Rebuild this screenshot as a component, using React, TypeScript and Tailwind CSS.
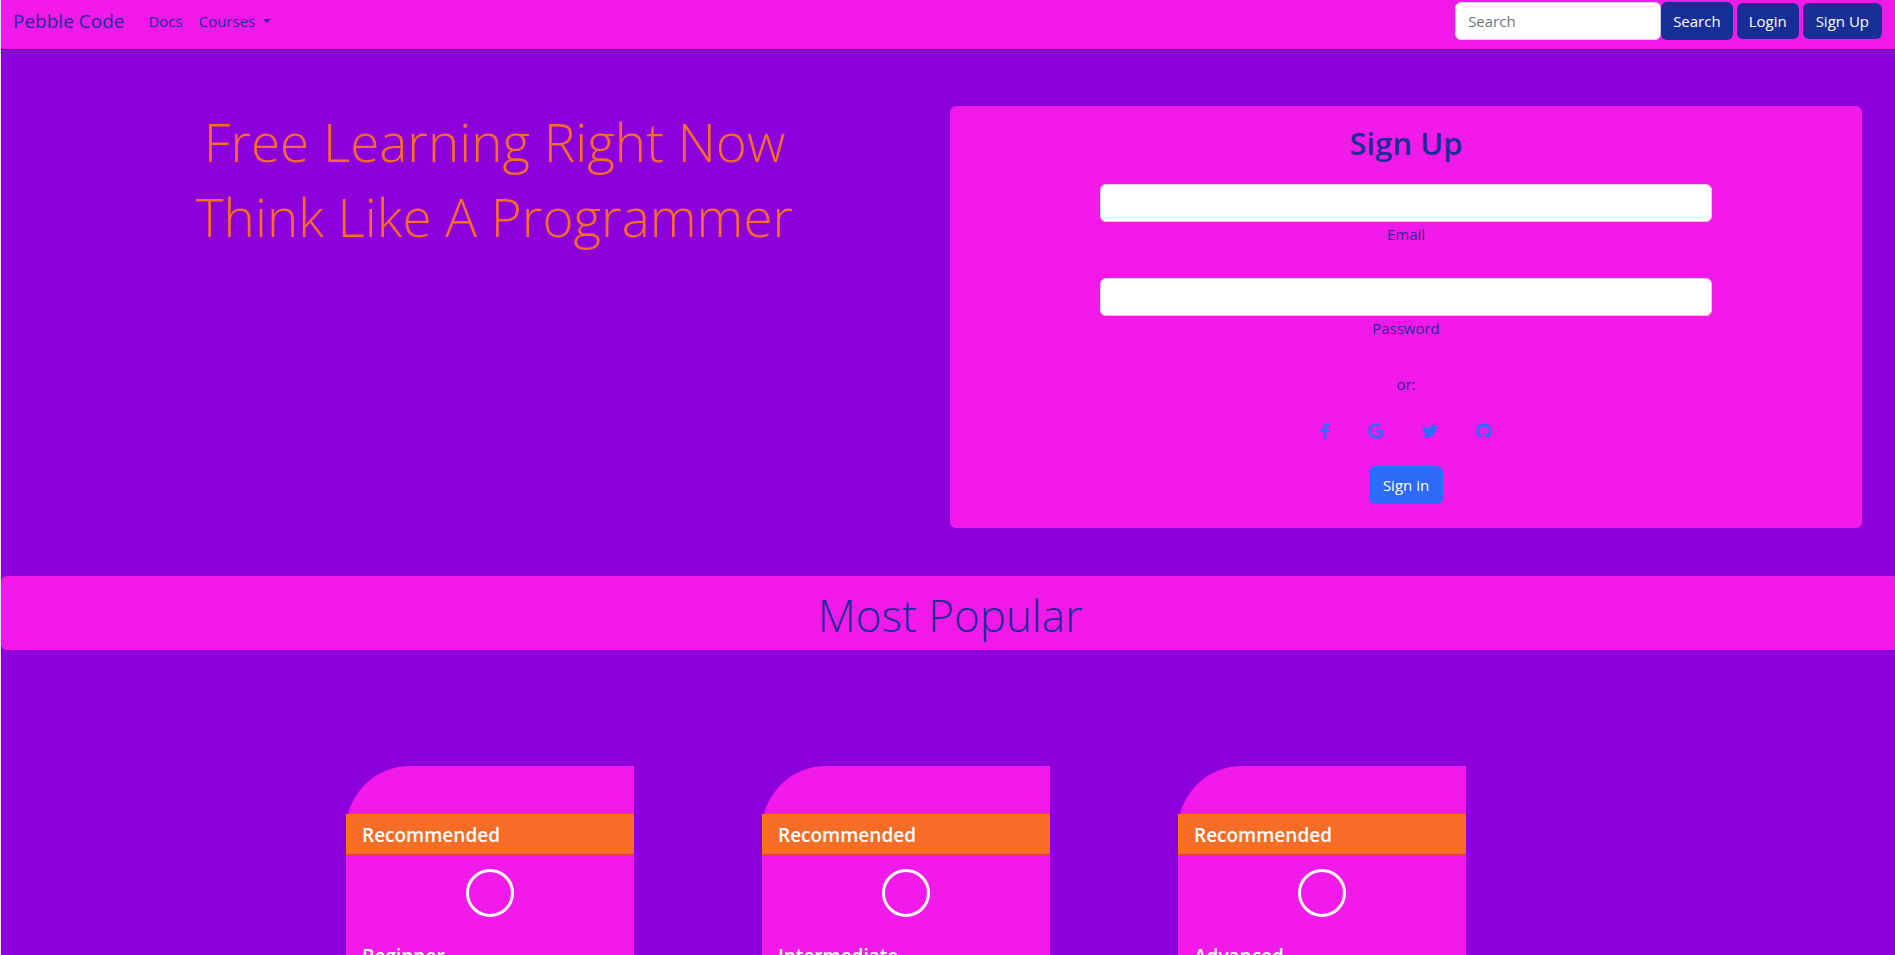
import React from "react";
import { FaFacebookF, FaGoogle, FaTwitter, FaGithub } from "react-icons/fa";

const levels = ["Beginner", "Intermediate", "Advanced"];

const socials = [
  { name: "Facebook", Icon: FaFacebookF, size: "h-4 w-[10px]" },
  { name: "Google", Icon: FaGoogle, size: "size-4" },
  { name: "Twitter", Icon: FaTwitter, size: "size-4" },
  { name: "GitHub", Icon: FaGithub, size: "size-4" },
];

function NavBar() {
  return (
    <nav className="flex h-[50px] items-start justify-between border-b border-[#2b1040] bg-[#f21ae8] pr-[13px] pl-3">
      <div className="flex h-[42px] items-center">
        <a href="#" className="mr-6 text-[19px]">Pebble Code</a>
        <a href="#docs" className="mr-4">Docs</a>
        <button type="button" className="flex items-center gap-2">
          Courses
          <span className="border-x-4 border-t-4 border-x-transparent border-t-[#182e97]" />
        </button>
      </div>
      <div className="flex items-center gap-1 pt-[2px]">
        <form className="flex" onSubmit={(e) => e.preventDefault()}>
          <input
            type="search"
            aria-label="Search"
            placeholder="Search"
            className="h-[38px] w-[206px] rounded-md border border-[#ced4da] bg-white px-3 text-[#212529] placeholder:text-[#6c757d]"
          />
          <button type="submit" className="h-[38px] rounded-md bg-[#182e97] px-3 text-white">Search</button>
        </form>
        <button type="button" className="h-9 rounded-md bg-[#182e97] px-3 text-white">Login</button>
        <button type="button" className="h-9 rounded-md bg-[#182e97] px-[13px] text-white">Sign Up</button>
      </div>
    </nav>
  );
}

function Field({ id, label, type }: { id: string; label: string; type: string }) {
  return (
    <div className="mb-8 flex w-full max-w-[612px] flex-col items-center">
      <input
        id={id}
        type={type}
        className="h-[38px] w-full rounded-md border border-[#ced4da] bg-white px-3 text-[#212529]"
      />
      <label htmlFor={id} className="leading-6">{label}</label>
    </div>
  );
}

function SignUpCard() {
  return (
    <form
      className="flex flex-col items-center rounded-md bg-[#f21ae8] pt-[18px] pb-6"
      onSubmit={(e) => e.preventDefault()}
    >
      <h2 className="mb-[22px] text-[31px] leading-[38px] font-semibold">Sign Up</h2>
      <Field id="email" label="Email" type="email" />
      <Field id="password" label="Password" type="password" />
      <p className="mb-4 leading-6">or:</p>
      <div className="mb-4 flex gap-1 text-[#2e6bfb]">
        {socials.map(({ name, Icon, size }) => (
          <button key={name} type="button" aria-label={name} className="flex h-[38px] items-center px-[17px]">
            <Icon className={size} />
          </button>
        ))}
      </div>
      <button type="submit" className="h-[38px] rounded-md bg-[#2e6bfb] px-[14px] text-white">Sign in</button>
    </form>
  );
}

function CourseCard({ level }: { level: string }) {
  return (
    <article className="w-72 rounded-tl-[64px] bg-[#f21ae8] pt-12 text-white">
      <h3 className="border-b border-[#c4561e] bg-[#f76d25] px-4 pt-[7px] pb-[5px] text-[19px] leading-7 font-semibold">
        Recommended
      </h3>
      <div className="px-4 pt-[14px] pb-12">
        <div className="mx-auto size-12 rounded-full border-[3px] border-white" />
        <h4 className="mt-[25px] text-[19px] leading-7 font-semibold">{level}</h4>
      </div>
    </article>
  );
}

export default function App() {
  return (
    <div className="h-screen overflow-x-hidden overflow-y-auto border-l border-[#e4e4e4] bg-[#8c00db] font-['Open_Sans',sans-serif] text-[15px] text-[#182e97] [scrollbar-width:none]">
      <NavBar />
      <section className="grid grid-cols-[987fr_907fr] pt-14">
        <h1 className="-mt-[2px] text-center text-[53px] leading-[75px] font-light text-[#f76d25]">
          Free Learning Right Now
          <br />
          Think Like A Programmer
        </h1>
        <div className="-ml-[38px] pr-[33px]">
          <SignUpCard />
        </div>
      </section>
      <section className="mt-12">
        <h2 className="-mr-1 h-[74px] rounded-md bg-[#f21ae8] pt-1 text-center text-[44px] leading-[70px] font-light">
          Most Popular
        </h2>
        <div className="mt-[116px] flex gap-32 pl-[345px]">
          {levels.map((level) => (
            <CourseCard key={level} level={level} />
          ))}
        </div>
      </section>
    </div>
  );
}
